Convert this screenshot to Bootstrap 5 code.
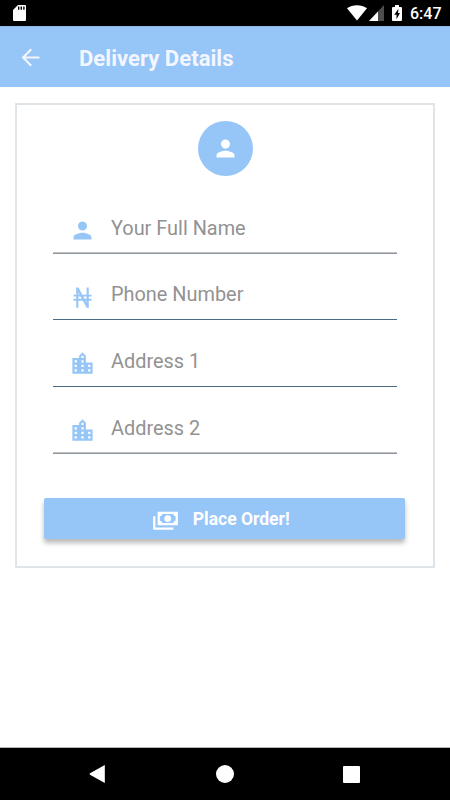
<!DOCTYPE html>
<html lang="en">
<head>
<meta charset="utf-8">
<meta name="viewport" content="width=device-width, initial-scale=1">
<title>Delivery Details</title>
<link href="https://cdn.jsdelivr.net/npm/bootstrap@5.3.0/dist/css/bootstrap.min.css" rel="stylesheet">
<style>
  body { font-family: Roboto, sans-serif; color: #fff; }
  svg { display: block; flex: none; }
  .screen { width: 450px; height: 800px; }
  .status { height: 26px; padding: 0 9px 0 13px; }
  .clock { font-size: 16px; font-weight: 500; line-height: 26px; margin: 2px 0 0 8px; width: 31px; white-space: nowrap; }
  .signal { margin: 0 8px 0 2px; }
  .appbar { height: 61px; background: #96c5f7; padding-left: 17px; color: #f4f6ff; border-top: 1px solid #8db9e8; }
  .appbar h1 { font-size: 22.1px; font-weight: 700; line-height: 28px; margin: 2px 0 0 35px; }
  .sheet { margin: 16px 15px 0 15px; height: 465px; border: 2px solid #dfe4e9; border-radius: 0; padding: 16.4px 27px 0; }
  .avatar-disc { width: 55px; height: 55px; background: #96c5f7; }
  .fields { margin: 10.5px 9px 0; color: #96c5f7; }
  .field { height: 66.75px; padding: 27.7px 0 0 15.5px; border-bottom: 1px solid #8b959f; box-shadow: 0 -1px 0 #c5c3c1 inset; }
  .field.deep { border-bottom-color: #496b86; box-shadow: none; }
  .field input { font-size: 19.9px; line-height: 28px; height: 28px; margin-left: 15.5px; min-width: 0; color: #555; }
  .field input::placeholder { color: #929292; opacity: 1; }
  .field svg { margin-top: 2.4px; }
  .order { margin: 44.1px 1px 0 0; height: 41px; background: #96c5f7; border-radius: 2px; color: #fff; font-size: 17.5px; font-weight: 700; box-shadow: 0 4px 5px rgba(0,0,0,.28); }
  .order:hover { background: #96c5f7; color: #fff; }
  .order svg { margin: 1px 14px 0 -7.5px; }
  .order span { margin-top: 1px; }
  .navkeys { height: 52px; box-shadow: 0 -1px 0 #b5b5b5; padding: 0 90px 0 89px; }
</style>
<script src="https://cdn.jsdelivr.net/npm/bootstrap@5.3.0/dist/js/bootstrap.bundle.min.js"></script>
</head>
<body class="bg-white">
<svg width="0" height="0" class="position-absolute">
  <symbol id="person" viewBox="0 0 24 24"><path fill="currentColor" d="M12 12c2.21 0 4-1.79 4-4s-1.79-4-4-4-4 1.79-4 4 1.79 4 4 4zm0 2c-2.67 0-8 1.34-8 4v2h16v-2c0-2.66-5.33-4-8-4z"/></symbol>
  <symbol id="city" viewBox="0 0 24 24"><path fill="currentColor" d="M15 11V5l-3-3-3 3v2H3v14h18V11h-6zm-8 8H5v-2h2v2zm0-4H5v-2h2v2zm0-4H5V9h2v2zm6 8h-2v-2h2v2zm0-4h-2v-2h2v2zm0-4h-2V9h2v2zm0-4h-2V5h2v2zm6 12h-2v-2h2v2zm0-4h-2v-2h2v2z"/></symbol>
  <symbol id="naira" viewBox="0 0 24 24"><path fill="none" stroke="currentColor" stroke-width="1.900" d="M7.400 3v18M16.600 3v18"/><path fill="none" stroke="currentColor" stroke-width="1.600" d="M4 10.300h16M4 14h16"/><path fill="none" stroke="currentColor" stroke-width="2.200" d="M7.400 3.600L16.600 20.400"/></symbol>
</svg>
<div class="screen d-flex flex-column overflow-hidden">
  <div class="status bg-black d-flex align-items-center">
    <svg class="me-auto" width="13" height="16" viewBox="0 0 13 16"><path fill="#fff" d="M5 0h7a1 1 0 0 1 1 1v14a1 1 0 0 1-1 1H1a1 1 0 0 1-1-1V5z"/><path stroke="#000" stroke-width="1.4" d="M5.700 1.600v3.200M8.300 1.600v3.200M10.900 1.600v3.200"/></svg>
    <svg width="20" height="16" viewBox="0 0 20 16"><path fill="#fff" d="M10 15.500L0 3.200C5.600-.9 14.400-.9 20 3.200z"/></svg>
    <svg class="signal" width="15" height="16" viewBox="0 0 15 16"><path fill="#4d4d4d" d="M15 0v16H0z"/><path fill="#fff" d="M9 6.400V16H0z"/></svg>
    <svg width="10" height="17" viewBox="0 0 10 17"><path fill="#fff" d="M3 0h4v2h2a1 1 0 0 1 1 1v12a1 1 0 0 1-1 1H1a1 1 0 0 1-1-1V3a1 1 0 0 1 1-1h2z"/><path fill="#000" d="M6.500 3.800L2.200 9.800h2.300v4.500L8 8H6z"/></svg>
    <span class="clock">6:47</span>
  </div>
  <header class="appbar d-flex align-items-center">
    <svg width="27" height="27" viewBox="0 0 24 24"><path fill="currentColor" d="M20 11.100H7.600l5.700-5.700L12 4.100 4.100 12l7.900 7.900 1.300-1.300-5.700-5.700H20z"/></svg>
    <h1>Delivery Details</h1>
  </header>
  <main class="flex-grow-1">
    <form class="sheet card">
      <div class="avatar-disc rounded-circle d-flex align-items-center justify-content-center mx-auto"><svg width="27" height="27"><use href="#person"/></svg></div>
      <div class="fields">
        <label class="field d-flex"><svg width="27" height="27"><use href="#person"/></svg><input class="border-0 p-0 bg-transparent flex-grow-1" type="text" placeholder="Your Full Name"></label>
        <label class="field deep d-flex"><svg width="27" height="27"><use href="#naira"/></svg><input class="border-0 p-0 bg-transparent flex-grow-1" type="tel" placeholder="Phone Number"></label>
        <label class="field deep d-flex"><svg width="27" height="27"><use href="#city"/></svg><input class="border-0 p-0 bg-transparent flex-grow-1" type="text" placeholder="Address 1"></label>
        <label class="field d-flex"><svg width="27" height="27"><use href="#city"/></svg><input class="border-0 p-0 bg-transparent flex-grow-1" type="text" placeholder="Address 2"></label>
      </div>
      <button type="button" class="order btn border-0 p-0 d-flex align-items-center justify-content-center">
        <svg width="27" height="27" viewBox="0 0 24 24"><path fill="currentColor" fill-rule="evenodd" d="M5 6h18v12H5zM9 8a2 2 0 0 1-2 2v4a2 2 0 0 1 2 2h10a2 2 0 0 1 2-2v-4a2 2 0 0 1-2-2zM14 9a3 3 0 1 1 0 6 3 3 0 0 1 0-6zM1 10h2v10h16v2H1z"/></svg>
        <span>Place Order!</span>
      </button>
    </form>
  </main>
  <nav class="navkeys bg-black d-flex align-items-center justify-content-between">
    <svg width="17" height="18" viewBox="0 0 17 18"><path fill="#fff" d="M15.800 0v18L1 9.800Q0 9 1 8.200z"/></svg>
    <svg width="18" height="18" viewBox="0 0 18 18"><circle cx="9" cy="9" r="9" fill="#fff"/></svg>
    <svg width="17" height="17" viewBox="0 0 17 17"><rect width="17" height="17" rx="1" fill="#fff"/></svg>
  </nav>
</div>
</body>
</html>
